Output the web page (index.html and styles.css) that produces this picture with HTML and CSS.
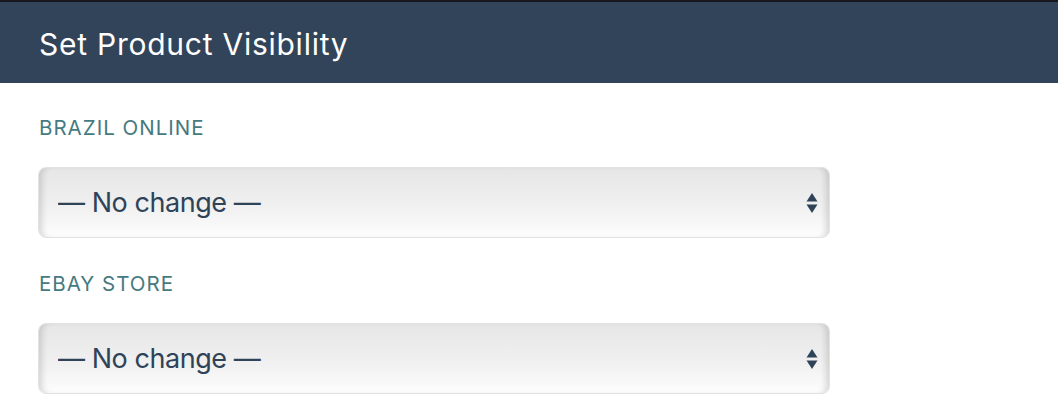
FILE: index.html
```html
<!DOCTYPE html>
<html lang="en">
<head>
    <meta charset="UTF-8">
    <meta name="viewport" content="width=device-width, initial-scale=1.0">
    <title>Set Product Visibility</title>
    <link rel="stylesheet" href="styles.css">
</head>
<body>
    <div class="panel">
        <h2 class="panel-title">Set Product Visibility</h2>

        <form class="visibility-form">
            <!-- Brazil Online -->
            <div class="field">
                <label class="field-label" for="brazilOnline">Brazil Online</label>
                <div class="select-wrap">
                    <select id="brazilOnline" class="select">
                        <option>— No change —</option>
                        <option>Visible</option>
                        <option>Hidden</option>
                    </select>
                    <svg class="select-arrows" width="12" height="22" viewBox="0 0 12 22">
                        <path d="M6 1 L11.5 9.5 L0.5 9.5 Z" fill="#2f4358"/>
                        <path d="M6 21 L11.5 12.5 L0.5 12.5 Z" fill="#2f4358"/>
                    </svg>
                </div>
            </div>

            <!-- eBay Store -->
            <div class="field">
                <label class="field-label" for="ebayStore">eBay Store</label>
                <div class="select-wrap">
                    <select id="ebayStore" class="select">
                        <option>— No change —</option>
                        <option>Visible</option>
                        <option>Hidden</option>
                    </select>
                    <svg class="select-arrows" width="12" height="22" viewBox="0 0 12 22">
                        <path d="M6 1 L11.5 9.5 L0.5 9.5 Z" fill="#2f4358"/>
                        <path d="M6 21 L11.5 12.5 L0.5 12.5 Z" fill="#2f4358"/>
                    </svg>
                </div>
            </div>
        </form>
    </div>
</body>
</html>
```

FILE: styles.css
```css
/* General Styles */
body {
    font-family: Inter, "Liberation Sans", Arial, sans-serif;
    background-color: #ffffff;
    margin: 0;
    border-top: 2px solid #17191c;
}

.panel {
    background-color: white;
}

.panel-title {
    margin: 0;
    background-color: #324459;
    color: #ffffff;
    font-size: 30px;
    font-weight: normal;
    letter-spacing: 0.75px;
    height: 81px;
    line-height: 84px;
    padding: 0 39px;
}

.visibility-form {
    display: flex;
    flex-direction: column;
    padding: 33px 38px 0;
    gap: 34px;
}

.field {
    display: flex;
    flex-direction: column;
    gap: 27px;
}

.field-label {
    color: #467a80;
    font-size: 20.5px;
    text-transform: uppercase;
    letter-spacing: 1px;
    line-height: 24px;
    padding-left: 1px;
}

.select-wrap {
    position: relative;
    width: 792px;
}

.select {
    -webkit-appearance: none;
    appearance: none;
    width: 100%;
    height: 71px;
    padding: 0 50px 0 19px;
    border: 1px solid #e2e2e6;
    border-radius: 8px;
    background: linear-gradient(to bottom, #e6e6e6 0%, #f0f0f0 55%, #fdfdfd 100%);
    box-shadow: inset 7px 0 6px -4px rgba(0, 0, 0, 0.14), inset -7px 0 6px -4px rgba(0, 0, 0, 0.14);
    color: #2f4358;
    font-family: Inter, "Liberation Sans", Arial, sans-serif;
    font-size: 27px;
    letter-spacing: -0.45px;
    outline: none;
}

.select-arrows {
    position: absolute;
    right: 12px;
    top: 25px;
    pointer-events: none;
}
```
